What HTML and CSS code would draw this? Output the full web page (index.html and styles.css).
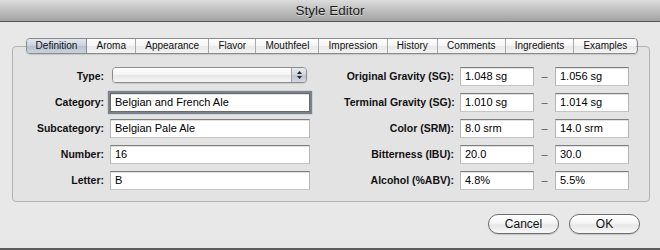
FILE: index.html
```
<!DOCTYPE html>
<html>
<head>
<meta charset="utf-8">
<link rel="stylesheet" href="styles.css">
</head>
<body>
<div class="window">
  <div class="titlebar">Style Editor</div>
  <div class="content">
    <div class="tabview">
      <div class="tabs">
        <div class="tab selected">Definition</div>
        <div class="tab">Aroma</div>
        <div class="tab">Appearance</div>
        <div class="tab">Flavor</div>
        <div class="tab">Mouthfeel</div>
        <div class="tab">Impression</div>
        <div class="tab">History</div>
        <div class="tab">Comments</div>
        <div class="tab">Ingredients</div>
        <div class="tab">Examples</div>
      </div>
      <div class="box">
        <div class="left grid">
          <div class="label">Type:</div>
          <div class="select"><span class="select-body"></span><span class="select-arrows"><svg width="7" height="10" viewBox="0 0 7 10"><path d="M3.5 1 L6 4 L1 4 Z" fill="#222"/><path d="M3.5 9 L6 6 L1 6 Z" fill="#222"/></svg></span></div>
          <div class="label">Category:</div>
          <div class="field focused">Belgian and French Ale</div>
          <div class="label">Subcategory:</div>
          <div class="field">Belgian Pale Ale</div>
          <div class="label">Number:</div>
          <div class="field">16</div>
          <div class="label">Letter:</div>
          <div class="field">B</div>
        </div>
        <div class="right grid">
          <div class="label">Original Gravity (SG):</div>
          <div class="field">1.048 sg</div>
          <div class="dash">–</div>
          <div class="field">1.056 sg</div>
          <div class="label">Terminal Gravity (SG):</div>
          <div class="field">1.010 sg</div>
          <div class="dash">–</div>
          <div class="field">1.014 sg</div>
          <div class="label">Color (SRM):</div>
          <div class="field">8.0 srm</div>
          <div class="dash">–</div>
          <div class="field">14.0 srm</div>
          <div class="label">Bitterness (IBU):</div>
          <div class="field">20.0</div>
          <div class="dash">–</div>
          <div class="field">30.0</div>
          <div class="label">Alcohol (%ABV):</div>
          <div class="field">4.8%</div>
          <div class="dash">–</div>
          <div class="field">5.5%</div>
        </div>
      </div>
    </div>
    <div class="buttons">
      <div class="button">Cancel</div>
      <div class="button">OK</div>
    </div>
  </div>
</div>
</body>
</html>
```

FILE: styles.css
```
html, body {
  margin: 0;
  padding: 0;
}
body {
  width: 660px;
  height: 250px;
  overflow: hidden;
  background: #e8e8e8;
  font-family: "Liberation Sans", Arial, sans-serif;
  color: #000;
}
.window {
  height: 250px;
  box-sizing: border-box;
  border-bottom: 2px solid #5c5c5c;
  background: #e8e8e8;
  display: flex;
  flex-direction: column;
}
.titlebar {
  height: 21px;
  line-height: 22px;
  border-bottom: 1px solid #555;
  background: linear-gradient(#dcdcdc, #c2c2c2 45%, #a3a3a3);
  text-align: center;
  font-size: 13.5px;
  color: #1c1c1c;
  text-shadow: 0 1px 0 rgba(255,255,255,0.45);
}
.content {
  padding-top: 16px;
  display: flex;
  flex-direction: column;
}
.tabview {
  margin: 0 10px 0 12px;
  display: flex;
  flex-direction: column;
  align-items: center;
}
.tabs {
  position: relative;
  z-index: 1;
  width: 612px;
  height: 16px;
  box-sizing: border-box;
  display: flex;
  border: 1px solid #8a8a8a;
  border-radius: 4px;
  overflow: hidden;
  margin-bottom: -8px;
  margin-left: 1px;
  box-shadow: 0 1px 1px rgba(0,0,0,0.12);
}
.tab {
  flex: 1 1 auto;
  padding: 0 8px;
  font-size: 10px;
  line-height: 14px;
  text-align: center;
  white-space: nowrap;
  color: #111;
  background: linear-gradient(#ffffff, #f4f4f4 50%, #e9e9e9 51%, #f2f2f2);
  border-left: 1px solid #a9a9a9;
}
.tab:first-child {
  border-left: none;
}
.tab.selected {
  background: linear-gradient(#e3e8ef, #c8d0db 50%, #b9c3d0 51%, #c9d1dc);
  border-right: 1px solid #8a8a8a;
}
.tab.selected + .tab {
  border-left: none;
}
.box {
  align-self: stretch;
  box-sizing: border-box;
  height: 156px;
  border: 1px solid #b2b2b2;
  border-radius: 4px;
  background: #e3e3e3;
  padding: 20px 0 0 9px;
  display: flex;
  gap: 34px;
}
.grid {
  display: grid;
  grid-auto-rows: 19px;
  row-gap: 7px;
  align-content: start;
}
.left {
  grid-template-columns: 82px 200px;
  column-gap: 6px;
}
.right {
  grid-template-columns: 116px 74px 21px 74px;
  column-gap: 0;
}
.right .label {
  padding-right: 6px;
}
.label {
  font-weight: bold;
  font-size: 10.5px;
  line-height: 19px;
  text-align: right;
  white-space: nowrap;
  color: #111;
}
.field {
  box-sizing: border-box;
  height: 19px;
  background: #fff;
  border: 1px solid;
  border-color: #7e7e7e #b6b6b6 #c6c6c6 #b6b6b6;
  box-shadow: inset 0 1px 0 #e2e2e2;
  font-size: 11px;
  line-height: 17px;
  padding-left: 4px;
  white-space: nowrap;
}
.field.focused {
  box-shadow: 0 0 1px 2px rgba(105,113,124,0.85), inset 0 1px 0 #e2e2e2;
  border-color: #6a6a6a;
}
.dash {
  text-align: center;
  font-size: 11px;
  line-height: 19px;
  color: #555;
}
.select {
  margin-left: 2px;
  width: 195px;
  height: 16px;
  box-sizing: border-box;
  border: 1px solid #8c8c8c;
  border-radius: 4px;
  display: flex;
  overflow: hidden;
  box-shadow: 0 1px 1px rgba(0,0,0,0.1);
}
.select-body {
  flex: 1;
  background: linear-gradient(#ffffff, #f3f3f3 50%, #e6e6e6 51%, #f5f5f5);
}
.select-arrows {
  width: 14px;
  border-left: 1px solid #a0a0a0;
  background: linear-gradient(#e6eaef, #cfd5dd 50%, #bcc4cf 51%, #d3d9e1);
  display: flex;
  align-items: center;
  justify-content: center;
}
.buttons {
  display: flex;
  justify-content: flex-end;
  gap: 10px;
  padding-right: 20px;
  margin-top: 12px;
}
.button {
  width: 71px;
  height: 20px;
  box-sizing: border-box;
  border: 1px solid #6c6c6c;
  border-radius: 10px;
  background: linear-gradient(#ffffff, #f6f6f6 45%, #e6e6e6 55%, #f8f8f8);
  box-shadow: 0 1px 1px rgba(0,0,0,0.15);
  font-size: 12px;
  line-height: 18px;
  text-align: center;
  color: #111;
}
```
